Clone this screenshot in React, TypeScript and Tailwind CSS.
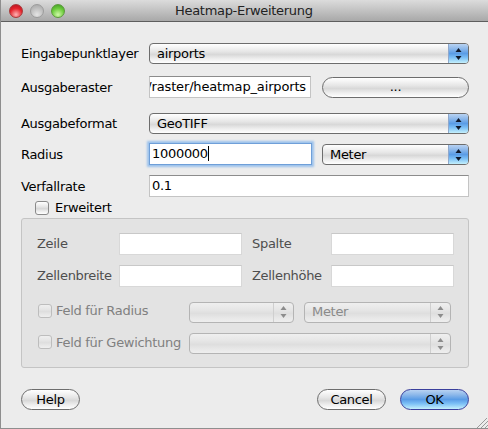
import {FC} from "react";

const aquaGray = "bg-[linear-gradient(#ffffff_0%,#f6f6f6_15%,#e6e6e6_40%,#d8d8d8_55%,#eeeeee_78%,#ffffff_100%)]";
const aquaBlue = "bg-[linear-gradient(#b8d2f2_0%,#8db8ea_25%,#5a9ce6_50%,#7cc0f6_72%,#c4f0fc_100%)]";
const disabledGray = "bg-[linear-gradient(#efefef_0%,#e6e6e6_35%,#dedede_55%,#e8e8e8_80%,#eeeeee_100%)]";

const Updown: FC<{color: string}> = ({color}) => (
    <svg width="7" height="14" viewBox="0 0 7 14" fill={color}>
        <path d="M3.5 1 L6.5 5 L0.5 5 Z" />
        <path d="M3.5 13 L0.5 9 L6.5 9 Z" />
    </svg>
);

const Select: FC<{text: string; className: string}> = ({text, className}) => (
    <div className={`flex h-[21px] overflow-hidden rounded-[4px] border border-[#6d6d6d] ${aquaGray} ${className}`}>
        <span className="flex-1 pl-[7px] text-[13px] leading-[19px] text-black">{text}</span>
        <div className={`flex w-[20px] items-center justify-center border-l border-[#8fa8cc] ${aquaBlue}`}>
            <Updown color="#10182a" />
        </div>
    </div>
);

const DisabledSelect: FC<{text?: string; className: string}> = ({text, className}) => (
    <div className={`flex h-[21px] overflow-hidden rounded-[4px] border border-[#b4b4b4] ${disabledGray} ${className}`}>
        <span className="flex-1 pl-[7px] text-[13px] leading-[18px] text-[#8a8a8a]">{text}</span>
        <div className="flex w-[20px] items-center justify-center border-l border-[#cfcfcf]">
            <Updown color="#8c8c8c" />
        </div>
    </div>
);

const PillButton: FC<{text: string; className: string; primary?: boolean}> = ({text, className, primary}) => (
    <div
        className={`flex h-[21px] items-center justify-center rounded-full border text-[13px] text-black ${
            primary ? `border-[#3a3f9c] ${aquaBlue}` : `border-[#6d6d6d] ${aquaGray}`
        } ${className}`}
    >
        {text}
    </div>
);

const Field: FC<{className: string; children?: React.ReactNode}> = ({className, children}) => (
    <div className={`h-[22px] overflow-hidden whitespace-nowrap border border-[#c4c4c4] border-t-[#8c8c8c] bg-white text-[13px] leading-[20px] text-black ${className}`}>
        {children}
    </div>
);

const GroupField: FC<{className?: string}> = ({className}) => (
    <div className={`h-[22px] w-[123px] border border-[#d8d8d8] border-t-[#c8c8c8] bg-white ${className ?? ""}`} />
);

const CheckBox: FC<{disabled?: boolean}> = ({disabled}) => (
    <div
        className={`h-[14px] w-[14px] rounded-[3px] border ${
            disabled ? `mb-[3px] border-[#bdbdbd] ${disabledGray}` : `border-[#8a8a8a] ${aquaGray}`
        }`}
    />
);

const App: FC = () => {
    return (
        <div
            className="relative flex h-[429px] w-[488px] flex-col overflow-hidden border-b border-l border-[#8e8e8e] bg-[#ececec] tracking-[-0.3px]"
            style={{fontFamily: '"DejaVu Sans", sans-serif'}}
        >
            {/* title bar */}
            <div className="flex h-[22px] shrink-0 items-center border-b border-[#5e5e5e] bg-[linear-gradient(#dcdcdc,#a8a8a8)] pl-[8px]">
                <div className="flex gap-[7px]">
                    <div className="h-[14px] w-[14px] rounded-full border border-[#a83a3a] bg-[radial-gradient(circle_at_50%_80%,#ffb4b4,#e5242c_55%,#b01020)]" />
                    <div className="h-[14px] w-[14px] rounded-full border border-[#9c9c9c] bg-[radial-gradient(circle_at_50%_80%,#e4e4e4,#bcbcbc_60%,#a4a4a4)]" />
                    <div className="h-[14px] w-[14px] rounded-full border border-[#5c9a3c] bg-[radial-gradient(circle_at_50%_80%,#d0f8a8,#6ccc3c_55%,#3c9424)]" />
                </div>
                <span className="ml-[110px] text-[13px] text-[#222]">Heatmap-Erweiterung</span>
            </div>

            <div className="flex flex-1 flex-col pl-[20px] pr-[18px] text-[13px] text-black">
                <div className="mt-[21px] flex items-center">
                    <span className="w-[128px]">Eingabepunktlayer</span>
                    <Select text="airports" className="w-[320px]" />
                </div>

                <div className="mt-[12px] flex items-center">
                    <span className="mt-[1px] w-[128px]">Ausgaberaster</span>
                    <Field className="flex w-[162px] justify-end pr-[4px] tracking-[-0.15px]">/raster/heatmap_airports</Field>
                    <PillButton text="..." className="ml-[11px] w-[147px]" />
                </div>

                <div className="mt-[15px] flex items-center">
                    <span className="w-[128px]">Ausgabeformat</span>
                    <Select text="GeoTIFF" className="w-[320px]" />
                </div>

                <div className="mt-[8px] flex items-center">
                    <span className="mt-[3px] w-[128px]">Radius</span>
                    <div className="flex h-[22px] w-[163px] items-center border border-[#6f9fd8] bg-white pl-[2px] text-[13px] shadow-[0_0_2px_2px_#9cc2ec]">
                        1000000
                        <span className="h-[15px] w-px bg-black" />
                    </div>
                    <Select text="Meter" className="ml-[10px] mt-[2px] w-[147px]" />
                </div>

                <div className="mt-[10px] flex items-center">
                    <span className="mt-[1px] w-[128px]">Verfallrate</span>
                    <Field className="w-[320px] pl-[2px]">0.1</Field>
                </div>

                <div className="mt-[3px] flex h-[16px] items-center pl-[14px]">
                    <CheckBox />
                    <span className="ml-[6px]">Erweitert</span>
                </div>

                {/* disabled group */}
                <div className="mt-[2px] flex h-[150px] w-[448px] flex-col rounded-[3px] border border-[#c4c4c4] bg-[#e3e3e3] text-[#4e4e4e]">
                    <div className="mt-[14px] flex items-center pl-[15px]">
                        <span className="w-[82px]">Zeile</span>
                        <GroupField />
                        <span className="ml-[10px] w-[79px]">Spalte</span>
                        <GroupField />
                    </div>
                    <div className="mt-[10px] flex items-center pl-[15px]">
                        <span className="w-[82px]">Zellenbreite</span>
                        <GroupField />
                        <span className="ml-[10px] w-[79px]">Zellenhöhe</span>
                        <GroupField />
                    </div>
                    <div className="mt-[14px] flex items-center pl-[16px] text-[#808080]">
                        <CheckBox disabled />
                        <span className="mb-[3px] ml-[4px] w-[133px]">Feld für Radius</span>
                        <DisabledSelect className="w-[105px]" />
                        <DisabledSelect text="Meter" className="ml-[10px] w-[147px]" />
                    </div>
                    <div className="mt-[9px] flex items-center pl-[16px] text-[#808080]">
                        <CheckBox disabled />
                        <span className="mb-[3px] ml-[4px] w-[133px]">Feld für Gewichtung</span>
                        <DisabledSelect className="w-[262px]" />
                    </div>
                </div>

                <div className="mt-[21px] flex items-center">
                    <PillButton text="Help" className="w-[59px]" />
                    <PillButton text="Cancel" className="ml-[237px] w-[69px]" />
                    <PillButton text="OK" primary className="ml-[14px] w-[69px]" />
                </div>
            </div>

            {/* resize grip */}
            <svg className="absolute bottom-0 right-0" width="11" height="10" viewBox="0 0 11 10" stroke="#9a9a9a" strokeWidth="1">
                <path d="M0 10 L10 0" />
                <path d="M4 10 L11 3" />
                <path d="M8 10 L11 7" />
            </svg>
        </div>
    );
};

export default App;
